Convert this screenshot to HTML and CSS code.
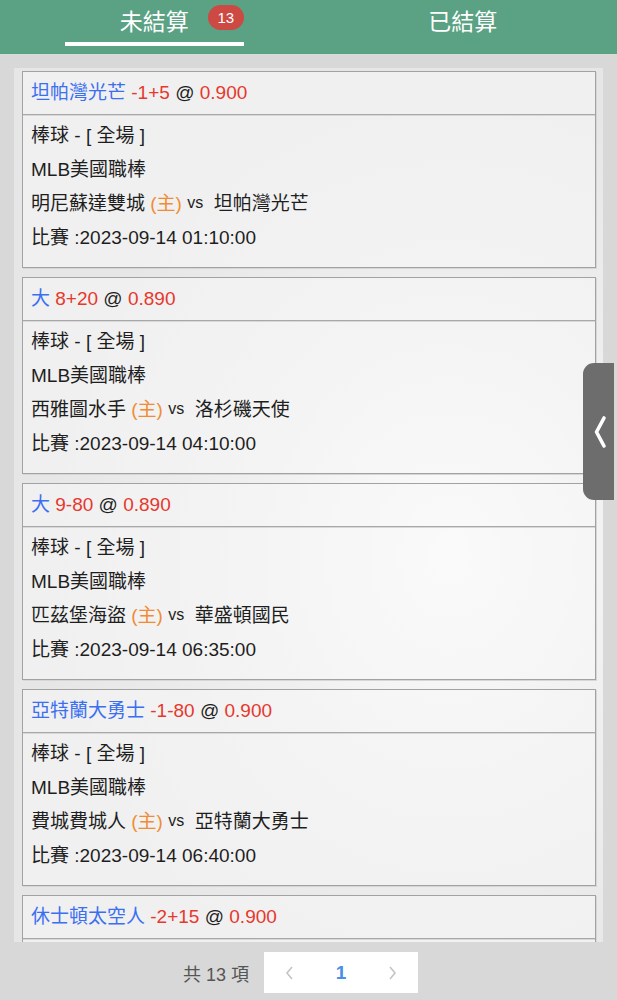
FILE: index.html
```html
<!DOCTYPE html>
<html lang="zh-Hant">
<head>
<meta charset="utf-8">
<link rel="stylesheet" href="styles.css">
</head>
<body>
<header class="tabs">
  <div class="tab active"><span class="tab-label">未結算<span class="badge">13</span></span><span class="underline"></span></div>
  <div class="tab"><span class="tab-label">已結算</span></div>
</header>
<main class="panel">
  <div class="card">
    <div class="card-head"><span class="blue">坦帕灣光芒</span> <span class="red">-1+5</span> @ <span class="red">0.900</span></div>
    <div class="card-body">
      <div class="line">棒球 - [ 全場 ]</div>
      <div class="line">MLB美國職棒</div>
      <div class="line">明尼蘇達雙城 <span class="home">(主)</span> <span class="vs">vs</span>&nbsp; 坦帕灣光芒</div>
      <div class="line">比賽 :2023-09-14 01:10:00</div>
    </div>
  </div>
  <div class="card">
    <div class="card-head"><span class="blue">大</span> <span class="red">8+20</span> @ <span class="red">0.890</span></div>
    <div class="card-body">
      <div class="line">棒球 - [ 全場 ]</div>
      <div class="line">MLB美國職棒</div>
      <div class="line">西雅圖水手 <span class="home">(主)</span> <span class="vs">vs</span>&nbsp; 洛杉磯天使</div>
      <div class="line">比賽 :2023-09-14 04:10:00</div>
    </div>
  </div>
  <div class="card">
    <div class="card-head"><span class="blue">大</span> <span class="red">9-80</span> @ <span class="red">0.890</span></div>
    <div class="card-body">
      <div class="line">棒球 - [ 全場 ]</div>
      <div class="line">MLB美國職棒</div>
      <div class="line">匹茲堡海盜 <span class="home">(主)</span> <span class="vs">vs</span>&nbsp; 華盛頓國民</div>
      <div class="line">比賽 :2023-09-14 06:35:00</div>
    </div>
  </div>
  <div class="card">
    <div class="card-head"><span class="blue">亞特蘭大勇士</span> <span class="red">-1-80</span> @ <span class="red">0.900</span></div>
    <div class="card-body">
      <div class="line">棒球 - [ 全場 ]</div>
      <div class="line">MLB美國職棒</div>
      <div class="line">費城費城人 <span class="home">(主)</span> <span class="vs">vs</span>&nbsp; 亞特蘭大勇士</div>
      <div class="line">比賽 :2023-09-14 06:40:00</div>
    </div>
  </div>
  <div class="card">
    <div class="card-head"><span class="blue">休士頓太空人</span> <span class="red">-2+15</span> @ <span class="red">0.900</span></div>
    <div class="card-body card-body-empty"></div>
  </div>
</main>
<footer class="pager">
  <span class="total">共 13 項</span>
  <div class="pages">
    <span class="pg arrow"><svg width="10" height="16" viewBox="0 0 10 16"><path d="M7 2 L2 8 L7 14" fill="none" stroke="#c4c4c4" stroke-width="1.6"/></svg></span>
    <span class="pg current">1</span>
    <span class="pg arrow"><svg width="10" height="16" viewBox="0 0 10 16"><path d="M3 2 L8 8 L3 14" fill="none" stroke="#c4c4c4" stroke-width="1.6"/></svg></span>
  </div>
</footer>
<div class="side-tab"><svg width="14" height="34" viewBox="0 0 14 34"><path d="M11 3 L3.5 17 L11 31" fill="none" stroke="#fff" stroke-width="3.6" stroke-linecap="round" stroke-linejoin="round"/></svg></div>
</body>
</html>
```
FILE: styles.css
```css
* { box-sizing: border-box; }
html, body { margin: 0; padding: 0; }
body {
  width: 617px;
  height: 1000px;
  overflow: hidden;
  background: #d8d8d8;
  font-family: "Liberation Sans", "Noto Sans CJK TC", sans-serif;
  color: #1e1e1e;
}
.tabs {
  display: flex;
  height: 54px;
  background: #5aa283;
}
.tab {
  flex: 1;
  position: relative;
  display: flex;
  justify-content: center;
  padding-top: 8px;
}
.tab-label {
  position: relative;
  color: #fff;
  font-size: 23px;
  line-height: 28px;
}
.badge {
  position: absolute;
  left: 88px;
  top: -3px;
  min-width: 36px;
  height: 25px;
  border-radius: 13px;
  background: #cc4a43;
  color: #fff;
  font-size: 15px;
  line-height: 25px;
  text-align: center;
}
.underline {
  position: absolute;
  left: 65px;
  width: 179px;
  top: 42px;
  height: 4px;
  background: #fff;
}
.panel {
  margin: 14px 14px 0 14px;
  width: 589px;
  height: 874px;
  overflow: hidden;
  padding: 3px 7px 0 8px;
  background: radial-gradient(ellipse 420px 480px at 74% 56%, #fdfdfd 0%, #f0f0f0 45%, #e6e6e6 100%);
}
.card {
  border: 1px solid #a2a2a2;
  box-shadow: 1px 1px 0 #d6d6d6;
  background: rgba(248, 248, 248, 0.55);
  margin-bottom: 9px;
}
.card-head {
  height: 43px;
  line-height: 42px;
  padding-left: 8px;
  font-size: 19px;
  border-bottom: 1px solid #a8a8a8;
  box-shadow: 0 1px 0 #d8d8d8;
}
.blue { color: #3b6ff2; }
.red { color: #e7382d; }
.card-body {
  padding: 4px 0 12px 8px;
  font-size: 19px;
}
.card-body-empty { height: 152px; }
.line {
  height: 34px;
  line-height: 34px;
}
.home { color: #f08c35; }
.vs {
  font-size: 16px;
  position: relative;
  top: -2px;
}
.pager {
  display: flex;
  justify-content: center;
  align-items: center;
  margin-top: 10px;
  padding-right: 16px;
}
.total {
  font-size: 18px;
  color: #555;
  margin-right: 15px;
}
.pages {
  display: flex;
  align-items: center;
  width: 154px;
  height: 41px;
  background: #fff;
}
.pg {
  flex: 1;
  display: flex;
  justify-content: center;
  align-items: center;
  height: 41px;
}
.current {
  color: #4a8fe6;
  font-size: 19px;
  font-weight: bold;
}
.side-tab {
  position: fixed;
  right: 3px;
  top: 363px;
  width: 31px;
  height: 137px;
  background: #6d6d6d;
  border-radius: 11px 0 0 11px;
  display: flex;
  justify-content: center;
  align-items: center;
  padding-left: 2px;
}
```
